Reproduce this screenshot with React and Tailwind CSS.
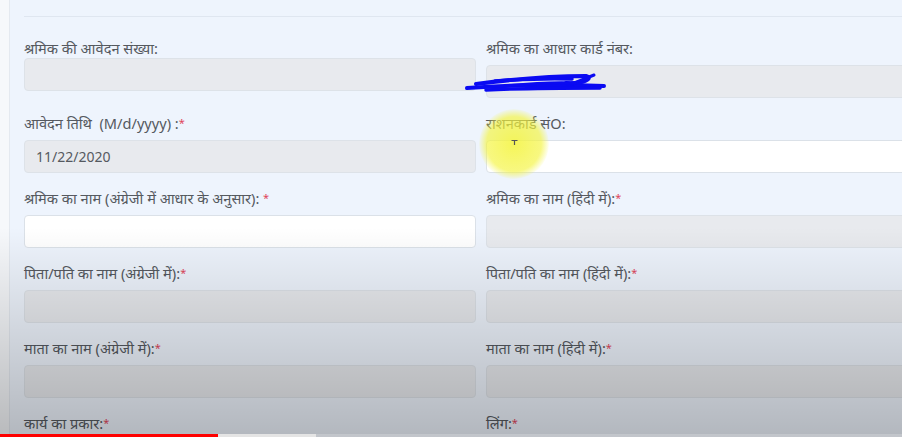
import React from 'react'

const rows = [
  [
    { label: 'श्रमिक की आवेदन संख्या:', kind: 'disabled', tight: true },
    { label: 'श्रमिक का आधार कार्ड नंबर:', kind: 'disabled' },
  ],
  [
    { label: 'आवेदन तिथि\u00a0\u00a0(M/d/yyyy) :', req: true, kind: 'disabled', value: '11/22/2020' },
    { label: 'राशनकार्ड संO:', kind: 'white' },
  ],
  [
    { label: 'श्रमिक का नाम (अंग्रेजी में आधार के अनुसार): ', req: true, kind: 'white' },
    { label: 'श्रमिक का नाम (हिंदी में):', req: true, kind: 'disabled' },
  ],
  [
    { label: 'पिता/पति का नाम (अंग्रेजी में):', req: true, kind: 'disabled' },
    { label: 'पिता/पति का नाम (हिंदी में):', req: true, kind: 'disabled' },
  ],
  [
    { label: 'माता का नाम (अंग्रेजी में):', req: true, kind: 'disabled' },
    { label: 'माता का नाम (हिंदी में):', req: true, kind: 'disabled' },
  ],
  [
    { label: 'कार्य का प्रकार:', req: true, kind: 'disabled' },
    { label: 'लिंग:', req: true, kind: 'disabled' },
  ],
]

function Field({ f }) {
  return (
    <div className="flex flex-col">
      <label className="h-[20px] leading-[20px] text-[14.6px] text-[#55595f] whitespace-pre">
        {f.label}
        {f.req && <span className="text-[#e0455a] text-[11px] align-top">*</span>}
      </label>
      <div
        className={
          f.kind === 'white'
            ? 'mt-[7px] h-[33px] rounded-[4px] border border-[#dbe1e8] bg-white px-[11px] flex items-center text-[14px] text-[#55595f]'
            : f.tight
            ? 'mt-0 h-[33px] rounded-[4px] border border-[#dde2e8] bg-[#e8eaee] px-[11px] flex items-center text-[14px] text-[#55595f]'
            : 'mt-[7px] h-[33px] rounded-[4px] border border-[#dde2e8] bg-[#e8eaee] px-[11px] flex items-center text-[14px] text-[#55595f]'
        }
      >
        {f.value}
      </div>
    </div>
  )
}

export default function App() {
  return (
    <div
      className="relative w-[902px] h-[437px] overflow-hidden bg-[#eef4fd] flex"
      style={{ fontFamily: '"Noto Sans", "Noto Sans Devanagari", "Lohit Devanagari", "Open Sans", sans-serif' }}
    >
      <div className="w-[10px] shrink-0 bg-[#f6f8fb] border-r border-[#e4e9f0]" />

      <div className="flex-1 pl-[14px] pt-[16px]">
        <div className="border-t border-[#dfe6f0]" />
        <div className="mt-[21px] flex flex-col gap-y-[15px]">
          {rows.map((r, i) => (
            <div key={i} className="grid grid-cols-[452px_452px] gap-x-[10px]">
              <Field f={r[0]} />
              <Field f={r[1]} />
            </div>
          ))}
        </div>
      </div>

      {/* blue scribble over aadhaar number */}
      <svg className="absolute left-0 top-0 pointer-events-none" width="902" height="437">
        <g fill="none" stroke="#0a0af2" strokeLinecap="round">
          <path d="M467 88 C 510 85, 560 84, 604 86" strokeWidth="4" />
          <path d="M476 84 C 515 79, 555 76, 586 76 C 594 78, 584 84, 566 83" strokeWidth="4" />
          <path d="M486 90 C 525 88, 565 88, 600 88" strokeWidth="3.5" />
          <path d="M572 84 L 594 75" strokeWidth="3" />
          <path d="M495 81 C 525 79, 550 78, 572 79" strokeWidth="3.5" />
          <path d="M505 86 C 535 83, 555 82, 575 83" strokeWidth="3" />
        </g>
      </svg>

      {/* cursor highlight */}
      <div className="absolute left-[479px] top-[109px] w-[70px] h-[70px] rounded-full bg-[radial-gradient(circle,rgba(244,244,60,0.85)_0%,rgba(244,244,60,0.65)_55%,rgba(244,244,60,0)_72%)] pointer-events-none" />
      <svg className="absolute left-[511px] top-[140px]" width="7" height="6">
        <path d="M0.5 0.5 H6.5 M3.5 0.5 V5" stroke="#555" strokeWidth="1.2" />
      </svg>

      {/* video vignette */}
      <div className="absolute inset-0 pointer-events-none bg-linear-to-b from-transparent from-[52%] to-black/25" />

      {/* progress bar */}
      <div className="absolute left-0 bottom-0 w-full h-[3px] flex bg-white/20">
        <div className="w-[218px] bg-[#ff0000]" />
        <div className="w-[98px] bg-[#e4e4e4]" />
      </div>
    </div>
  )
}
